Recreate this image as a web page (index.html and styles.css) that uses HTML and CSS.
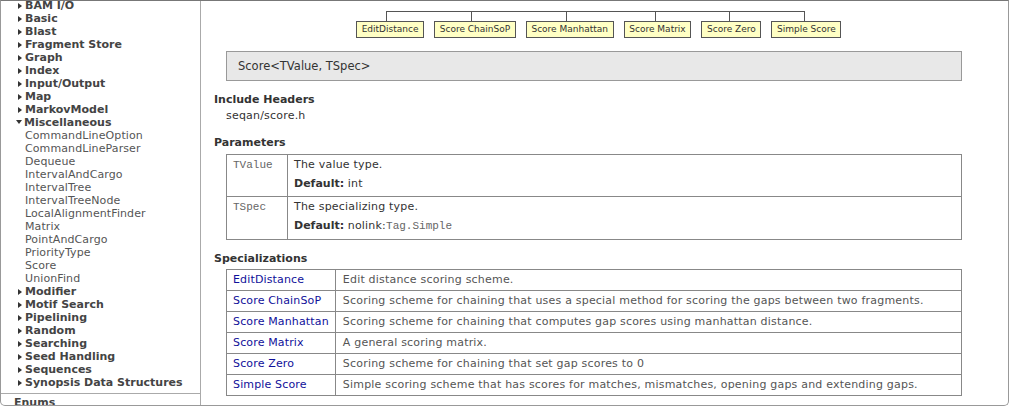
FILE: index.html
```html
<!DOCTYPE html>
<html>
<head>
<meta charset="utf-8">
<link rel="stylesheet" href="styles.css">
</head>
<body>
<div class="frame">
  <nav class="sidebar">
    <ul class="groups">
      <li class="group"><span class="tri"></span>BAM I/O</li>
      <li class="group"><span class="tri"></span>Basic</li>
      <li class="group"><span class="tri"></span>Blast</li>
      <li class="group"><span class="tri"></span>Fragment Store</li>
      <li class="group"><span class="tri"></span>Graph</li>
      <li class="group"><span class="tri"></span>Index</li>
      <li class="group"><span class="tri"></span>Input/Output</li>
      <li class="group"><span class="tri"></span>Map</li>
      <li class="group"><span class="tri"></span>MarkovModel</li>
      <li class="group open"><span class="tri down"></span>Miscellaneous</li>
      <li class="item">CommandLineOption</li>
      <li class="item">CommandLineParser</li>
      <li class="item">Dequeue</li>
      <li class="item">IntervalAndCargo</li>
      <li class="item">IntervalTree</li>
      <li class="item">IntervalTreeNode</li>
      <li class="item">LocalAlignmentFinder</li>
      <li class="item">Matrix</li>
      <li class="item">PointAndCargo</li>
      <li class="item">PriorityType</li>
      <li class="item">Score</li>
      <li class="item">UnionFind</li>
      <li class="group"><span class="tri"></span>Modifier</li>
      <li class="group"><span class="tri"></span>Motif Search</li>
      <li class="group"><span class="tri"></span>Pipelining</li>
      <li class="group"><span class="tri"></span>Random</li>
      <li class="group"><span class="tri"></span>Searching</li>
      <li class="group"><span class="tri"></span>Seed Handling</li>
      <li class="group"><span class="tri"></span>Sequences</li>
      <li class="group"><span class="tri"></span>Synopsis Data Structures</li>
    </ul>
    <div class="section">Enums</div>
  </nav>
  <main class="main">
    <div class="tree">
      <svg class="connector" width="487" height="10" viewBox="0 0 487 10">
        <path d="M30.5 0.5H448.5M30.5 0V10M115.5 0V10M210.5 0V10M299.5 0V10M373.5 0V10M448.5 0V10" stroke="#555" stroke-width="1" fill="none"/>
      </svg>
      <div class="nodes">
        <span class="node">EditDistance</span>
        <span class="node">Score ChainSoP</span>
        <span class="node">Score Manhattan</span>
        <span class="node">Score Matrix</span>
        <span class="node">Score Zero</span>
        <span class="node">Simple Score</span>
      </div>
    </div>
    <div class="signature">Score&lt;TValue, TSpec&gt;</div>

    <h3 class="heading first">Include Headers</h3>
    <p class="include">seqan/score.h</p>

    <h3 class="heading">Parameters</h3>
    <table class="params">
      <tr>
        <td class="pname"><code>TValue</code></td>
        <td class="pdesc">The value type.<br><b>Default:</b> int</td>
      </tr>
      <tr>
        <td class="pname"><code>TSpec</code></td>
        <td class="pdesc">The specializing type.<br><b>Default:</b> nolink:<code>Tag.Simple</code></td>
      </tr>
    </table>

    <h3 class="heading">Specializations</h3>
    <table class="specs">
      <tr><td class="sname"><a>EditDistance</a></td><td class="sdesc">Edit distance scoring scheme.</td></tr>
      <tr><td class="sname"><a>Score ChainSoP</a></td><td class="sdesc">Scoring scheme for chaining that uses a special method for scoring the gaps between two fragments.</td></tr>
      <tr><td class="sname"><a>Score Manhattan</a></td><td class="sdesc">Scoring scheme for chaining that computes gap scores using manhattan distance.</td></tr>
      <tr><td class="sname"><a>Score Matrix</a></td><td class="sdesc">A general scoring matrix.</td></tr>
      <tr><td class="sname"><a>Score Zero</a></td><td class="sdesc">Scoring scheme for chaining that set gap scores to 0</td></tr>
      <tr><td class="sname"><a>Simple Score</a></td><td class="sdesc">Simple scoring scheme that has scores for matches, mismatches, opening gaps and extending gaps.</td></tr>
    </table>
  </main>
</div>
</body>
</html>
```
FILE: styles.css
```css
html, body {
  margin: 0;
  padding: 0;
  background: #fff;
}
body {
  width: 1009px;
  height: 406px;
  overflow: hidden;
  font-family: "DejaVu Sans", Verdana, sans-serif;
  font-size: 11px;
  color: #333;
}
.frame {
  box-sizing: border-box;
  width: 1009px;
  height: 406px;
  border: 1px solid #999;
  border-top-color: #777;
  border-radius: 0 0 5px 5px;
  display: flex;
  overflow: hidden;
}
.sidebar {
  width: 199px;
  flex: none;
  border-right: 1px solid #aaa;
  overflow: hidden;
}
.groups {
  list-style: none;
  margin: -2px 0 0;
  padding: 0;
}
.groups li {
  line-height: 13px;
  height: 13px;
  white-space: nowrap;
}
.group {
  font-weight: bold;
  color: #444;
  padding-left: 17px;
}
.item {
  color: #555;
  padding-left: 24px;
  letter-spacing: 0.1px;
}
.tri {
  display: inline-block;
  width: 0;
  height: 0;
  border-left: 4px solid #333;
  border-top: 3.5px solid transparent;
  border-bottom: 3.5px solid transparent;
  margin-right: 3px;
  vertical-align: 0px;
}
.tri.down {
  border-left: 3.5px solid transparent;
  border-right: 3.5px solid transparent;
  border-top: 4px solid #333;
  border-bottom: 0;
  margin-left: -2px;
  margin-right: 2px;
  vertical-align: 2px;
}
.section {
  margin-top: 4px;
  border-top: 1px solid #aaa;
  padding-left: 13px;
  padding-top: 2px;
  font-weight: bold;
  color: #444;
  line-height: 13px;
}
.main {
  flex: 1;
  padding-left: 13px;
  min-width: 0;
}
.tree {
  margin-left: 142px;
  padding-top: 10px;
}
.connector {
  display: block;
}
.nodes {
  display: flex;
  gap: 10px;
}
.node {
  box-sizing: border-box;
  height: 17px;
  line-height: 15px;
  padding: 0 4.65px;
  border: 1px solid #555;
  background: #ffffc4;
  font-size: 9px;
  color: #333;
  white-space: nowrap;
}
.signature {
  box-sizing: border-box;
  margin: 13px 0 0 12px;
  width: 736px;
  height: 30px;
  line-height: 28px;
  border: 1px solid #999;
  background: #e8e8e8;
  padding-left: 11px;
  font-size: 11.5px;
  color: #333;
}
.heading {
  margin: 14px 0 5px;
  font-size: 11px;
  line-height: 13px;
  font-weight: bold;
  color: #333;
}
.heading.first {
  margin-top: 12px;
  margin-bottom: 0;
}
.include {
  margin: 3px 0 0 12px;
  line-height: 13px;
  color: #333;
  letter-spacing: 0.2px;
}
table {
  border-collapse: collapse;
  margin-left: 12px;
  width: 736px;
  font-size: 11px;
}
td {
  border: 1px solid #888;
  vertical-align: top;
  padding: 0;
}
code {
  font-family: "Liberation Mono", "Courier New", monospace;
  font-size: 11px;
  color: #666;
  letter-spacing: 0;
}
.params + .heading {
  margin-top: 12px;
  margin-bottom: 4px;
}
.pname {
  width: 48px;
  padding: 0 6px;
  line-height: 19px;
  height: 38px;
  padding-bottom: 3px;
}
.pdesc {
  padding: 0 6px 3px;
  line-height: 19px;
  color: #333;
  letter-spacing: 0.2px;
}
.pdesc b {
  color: #333;
  letter-spacing: 0;
}
.specs td {
  line-height: 20px;
  height: 20px;
}
.sname {
  width: 95px;
  padding: 0 6px;
  white-space: nowrap;
  letter-spacing: 0.15px;
}
.sname a {
  color: #10109a;
  text-decoration: none;
}
.sdesc {
  padding: 0 7px;
  color: #555;
  letter-spacing: 0.2px;
}
```
